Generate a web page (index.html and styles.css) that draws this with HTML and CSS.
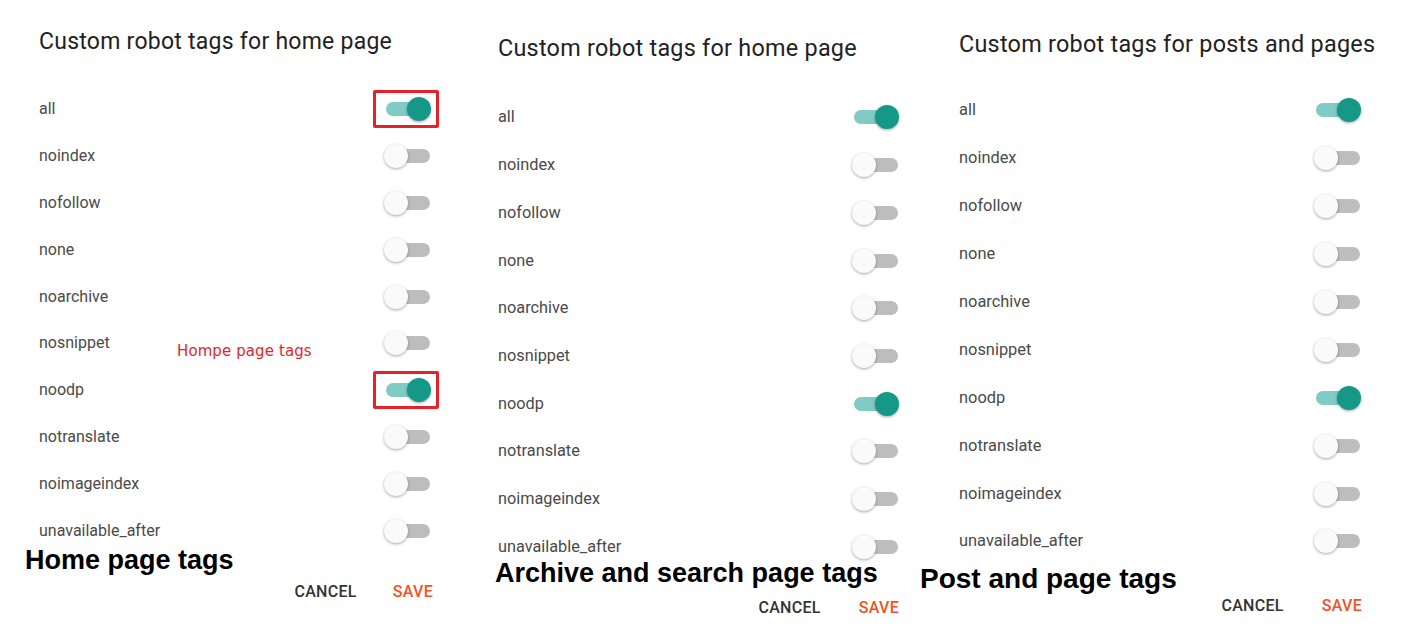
FILE: index.html
```html
<!DOCTYPE html>
<html lang="en">
<head>
<meta charset="utf-8">
<title>Custom robot tags</title>
<link rel="stylesheet" href="styles.css">
</head>
<body>
<div class="sheet">
  <section class="panel p1">
    <h2 class="title">Custom robot tags for home page</h2>
    <ul class="rows">
      <li class="row"><span class="label">all</span><span class="switch on boxed"><span class="knob"></span></span></li>
      <li class="row"><span class="label">noindex</span><span class="switch"><span class="knob"></span></span></li>
      <li class="row"><span class="label">nofollow</span><span class="switch"><span class="knob"></span></span></li>
      <li class="row"><span class="label">none</span><span class="switch"><span class="knob"></span></span></li>
      <li class="row"><span class="label">noarchive</span><span class="switch"><span class="knob"></span></span></li>
      <li class="row"><span class="label">nosnippet</span><span class="note">Hompe page tags</span><span class="switch"><span class="knob"></span></span></li>
      <li class="row"><span class="label">noodp</span><span class="switch on boxed"><span class="knob"></span></span></li>
      <li class="row"><span class="label">notranslate</span><span class="switch"><span class="knob"></span></span></li>
      <li class="row"><span class="label">noimageindex</span><span class="switch"><span class="knob"></span></span></li>
      <li class="row"><span class="label">unavailable_after</span><span class="switch"><span class="knob"></span></span></li>
    </ul>
    <div class="caption">Home page tags</div>
    <div class="actions"><span class="btn cancel">CANCEL</span><span class="btn save">SAVE</span></div>
  </section>

  <section class="panel p2">
    <h2 class="title">Custom robot tags for home page</h2>
    <ul class="rows">
      <li class="row"><span class="label">all</span><span class="switch on"><span class="knob"></span></span></li>
      <li class="row"><span class="label">noindex</span><span class="switch"><span class="knob"></span></span></li>
      <li class="row"><span class="label">nofollow</span><span class="switch"><span class="knob"></span></span></li>
      <li class="row"><span class="label">none</span><span class="switch"><span class="knob"></span></span></li>
      <li class="row"><span class="label">noarchive</span><span class="switch"><span class="knob"></span></span></li>
      <li class="row"><span class="label">nosnippet</span><span class="switch"><span class="knob"></span></span></li>
      <li class="row"><span class="label">noodp</span><span class="switch on"><span class="knob"></span></span></li>
      <li class="row"><span class="label">notranslate</span><span class="switch"><span class="knob"></span></span></li>
      <li class="row"><span class="label">noimageindex</span><span class="switch"><span class="knob"></span></span></li>
      <li class="row"><span class="label">unavailable_after</span><span class="switch"><span class="knob"></span></span></li>
    </ul>
    <div class="caption">Archive and search page tags</div>
    <div class="actions"><span class="btn cancel">CANCEL</span><span class="btn save">SAVE</span></div>
  </section>

  <section class="panel p3">
    <h2 class="title">Custom robot tags for posts and pages</h2>
    <ul class="rows">
      <li class="row"><span class="label">all</span><span class="switch on"><span class="knob"></span></span></li>
      <li class="row"><span class="label">noindex</span><span class="switch"><span class="knob"></span></span></li>
      <li class="row"><span class="label">nofollow</span><span class="switch"><span class="knob"></span></span></li>
      <li class="row"><span class="label">none</span><span class="switch"><span class="knob"></span></span></li>
      <li class="row"><span class="label">noarchive</span><span class="switch"><span class="knob"></span></span></li>
      <li class="row"><span class="label">nosnippet</span><span class="switch"><span class="knob"></span></span></li>
      <li class="row"><span class="label">noodp</span><span class="switch on"><span class="knob"></span></span></li>
      <li class="row"><span class="label">notranslate</span><span class="switch"><span class="knob"></span></span></li>
      <li class="row"><span class="label">noimageindex</span><span class="switch"><span class="knob"></span></span></li>
      <li class="row"><span class="label">unavailable_after</span><span class="switch"><span class="knob"></span></span></li>
    </ul>
    <div class="caption">Post and page tags</div>
    <div class="actions"><span class="btn cancel">CANCEL</span><span class="btn save">SAVE</span></div>
  </section>
</div>
</body>
</html>
```

FILE: styles.css
```css
* { box-sizing: border-box; }

html, body {
  margin: 0;
  padding: 0;
  background: #ffffff;
}

body {
  width: 1408px;
  height: 630px;
  overflow: hidden;
  font-family: Roboto, "Liberation Sans", sans-serif;
}

.sheet {
  display: flex;
  width: 1408px;
  height: 630px;
}

.panel {
  display: flex;
  flex-direction: column;
  padding-left: var(--cap-x);
  padding-top: var(--top);
}

.p1 {
  width: 460px;
  --cap-x: 25px;
  --indent: 14px;
  --top: 27.2px;
  --title-size: 23px;
  --rows-gap: 28.9px;
  --row-h: 46.8px;
  --row-pr: 30px;
  --label-size: 16px;
  --cap-size: 27px;
  --cap-gap: -6.5px;
  --act-gap: 10.1px;
  --act-pr: 27px;
  --btn-gap: 36px;
}

.p2 {
  width: 460px;
  --cap-x: 35px;
  --indent: 3px;
  --top: 33px;
  --title-size: 23.4px;
  --rows-gap: 30.6px;
  --row-h: 47.7px;
  --row-pr: 22px;
  --label-size: 16.3px;
  --cap-size: 27px;
  --cap-gap: -9px;
  --act-gap: 13px;
  --act-pr: 21px;
  --btn-gap: 38px;
}

.p3 {
  width: 488px;
  --cap-x: 0px;
  --indent: 39px;
  --top: 28.7px;
  --title-size: 23.4px;
  --rows-gap: 27.85px;
  --row-h: 47.9px;
  --row-pr: 48px;
  --label-size: 16.4px;
  --cap-size: 28px;
  --cap-gap: 1.75px;
  --act-gap: 4.4px;
  --act-pr: 46px;
  --btn-gap: 38px;
}

.title {
  margin: 0 0 0 var(--indent);
  font-family: Roboto, "Liberation Sans", sans-serif;
  font-weight: 400;
  font-size: var(--title-size);
  letter-spacing: 0.25px;
  line-height: 30px;
  color: #222222;
  white-space: nowrap;
}

.rows {
  list-style: none;
  margin: var(--rows-gap) var(--row-pr) 0 var(--indent);
  padding: 0;
}

.row {
  position: relative;
  display: flex;
  align-items: center;
  justify-content: space-between;
  height: var(--row-h);
}

.label {
  font-size: var(--label-size);
  color: #4a4a4a;
  line-height: 20px;
}

.note {
  position: absolute;
  left: 138px;
  top: 21.7px;
  font-family: "DejaVu Sans", sans-serif;
  font-size: 15px;
  line-height: 18px;
  color: #e4242b;
  letter-spacing: 0.1px;
}

.switch {
  position: relative;
  width: 44px;
  height: 14px;
  border-radius: 7px;
  background: #bdbdbd;
  flex: none;
}

.switch .knob {
  position: absolute;
  top: -5px;
  left: -2px;
  width: 24px;
  height: 24px;
  border-radius: 50%;
  background: #fafafa;
  box-shadow: 0 1px 3px rgba(0, 0, 0, 0.35);
}

.switch.on {
  background: #80cbc4;
}

.switch.on .knob {
  left: auto;
  right: -1px;
  background: #169888;
}

.switch.boxed::after {
  content: "";
  position: absolute;
  left: -13px;
  right: -9px;
  top: -12px;
  bottom: -12px;
  border: 3px solid #e5222a;
  border-radius: 2px;
}

.caption {
  margin-top: var(--cap-gap);
  font-family: "Liberation Sans", Arial, sans-serif;
  font-weight: 700;
  font-size: var(--cap-size);
  line-height: 24px;
  color: #000000;
  white-space: nowrap;
}

.actions {
  display: flex;
  justify-content: flex-end;
  gap: var(--btn-gap);
  margin-top: var(--act-gap);
  padding-right: var(--act-pr);
}

.btn {
  font-family: Roboto, "Liberation Sans", sans-serif;
  font-weight: 500;
  font-size: 16px;
  line-height: 20px;
  letter-spacing: 0.3px;
}

.cancel { color: #333333; }
.save { color: #f4511e; }
```
